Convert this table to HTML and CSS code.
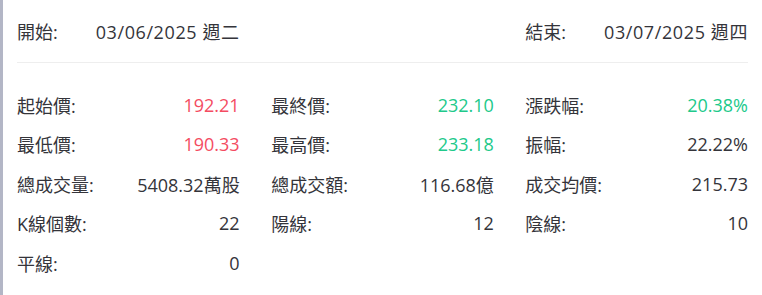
FILE: index.html
```html
<!DOCTYPE html>
<html lang="zh-Hant">
<head>
<meta charset="utf-8">
<title>區間統計</title>
<link rel="stylesheet" href="styles.css">
</head>
<body>
<div class="panel">
  <div class="header">
    <div class="cell"><span class="label">開始:</span><span class="value">03/06/2025 週二</span></div>
    <div class="cell end"><span class="label">結束:</span><span class="value">03/07/2025 週四</span></div>
  </div>
  <div class="stats">
    <div class="cell"><span class="label">起始價:</span><span class="value up">192.21</span></div>
    <div class="cell"><span class="label">最終價:</span><span class="value down">232.10</span></div>
    <div class="cell"><span class="label">漲跌幅:</span><span class="value down">20.38%</span></div>
    <div class="cell"><span class="label">最低價:</span><span class="value up">190.33</span></div>
    <div class="cell"><span class="label">最高價:</span><span class="value down">233.18</span></div>
    <div class="cell"><span class="label">振幅:</span><span class="value">22.22%</span></div>
    <div class="cell"><span class="label">總成交量:</span><span class="value">5408.32萬股</span></div>
    <div class="cell"><span class="label">總成交額:</span><span class="value">116.68億</span></div>
    <div class="cell"><span class="label">成交均價:</span><span class="value">215.73</span></div>
    <div class="cell"><span class="label">K線個數:</span><span class="value">22</span></div>
    <div class="cell"><span class="label">陽線:</span><span class="value">12</span></div>
    <div class="cell"><span class="label">陰線:</span><span class="value">10</span></div>
    <div class="cell"><span class="label">平線:</span><span class="value">0</span></div>
  </div>
</div>
</body>
</html>
```
FILE: styles.css
```css
html, body {
  margin: 0;
  padding: 0;
  background: #ffffff;
}
body {
  font-family: "Open Sans", "Noto Sans CJK TC", sans-serif;
  font-size: 18px;
  font-weight: 400;
  color: #34343a;
}
.panel {
  box-sizing: border-box;
  width: 762px;
  height: 295px;
  border-left: 3px solid #b3b6c6;
  padding: 0 14px;
}
.header {
  display: grid;
  grid-template-columns: repeat(3, 1fr);
  column-gap: 31.5px;
  height: 62px;
  align-items: center;
  border-bottom: 1px solid #eeeeee;
}
.header .cell.end {
  grid-column: 3;
}
.header .value {
  letter-spacing: 0.6px;
}
.stats {
  display: grid;
  grid-template-columns: repeat(3, 1fr);
  column-gap: 31.5px;
  grid-auto-rows: 39.5px;
  padding-top: 22px;
}
.cell {
  display: flex;
  justify-content: space-between;
  align-items: center;
}
.value.up {
  color: #f44c62;
}
.value.down {
  color: #21c98a;
}
```
